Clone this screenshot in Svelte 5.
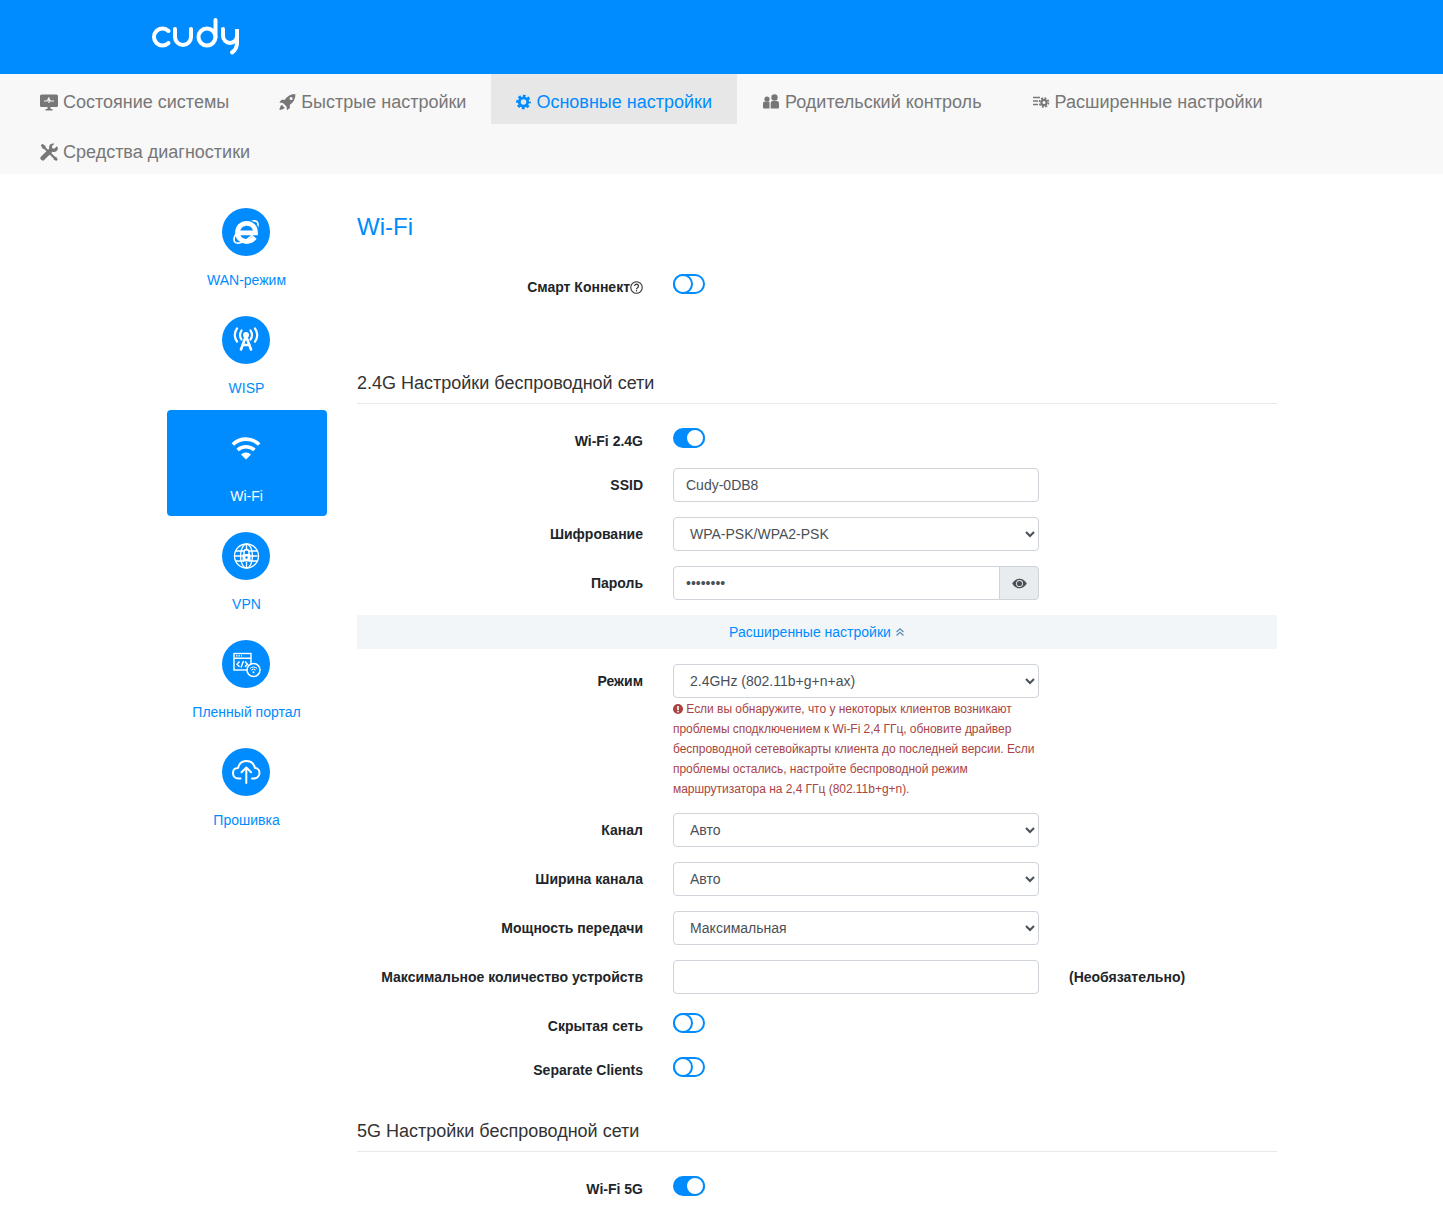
<script>
  const nav = [
    { id: 'monitor', label: 'Состояние системы', w: 18 },
    { id: 'rocket', label: 'Быстрые настройки', w: 17 },
    { id: 'gear', label: 'Основные настройки', w: 15, active: true },
    { id: 'users', label: 'Родительский контроль', w: 18 },
    { id: 'sliders', label: 'Расширенные настройки', w: 18 },
    { id: 'tools', label: 'Средства диагностики', w: 18 }
  ];
  const side = [
    { id: 'ie', label: 'WAN-режим' },
    { id: 'tower', label: 'WISP' },
    { id: 'wifi', label: 'Wi-Fi', active: true },
    { id: 'globe', label: 'VPN' },
    { id: 'portal', label: 'Пленный портал' },
    { id: 'cloud', label: 'Прошивка' }
  ];
</script>

{#snippet navIcon(id, w)}
  <svg class="nav-icon" width={w} height="18" viewBox="0 0 18 18" aria-hidden="true">
    {#if id === 'monitor'}
      <path fill="currentColor" d="M1.500 1.500h15A1.500 1.500 0 0 1 18 3v9.500a1.500 1.500 0 0 1-1.500 1.500h-15A1.500 1.500 0 0 1 0 12.500V3a1.500 1.500 0 0 1 1.500-1.500zM7.500 14h3v2h2v1.500h-7V16h2z"/>
      <path fill="none" stroke="#f8f8f8" stroke-width="1.200" d="M4 8h3l1-1.500L9 4.500v5.500M9 6.500l1.500 1.500H14"/>
    {:else if id === 'rocket'}
      <path fill="currentColor" fill-rule="evenodd" d="M17.500.5C12.500.5 8.700 2.500 6.200 6.500H2.700L.3 9.500l3.900.6 3.700 3.700.6 3.900 3-2.400v-3.500c4-2.500 6-6.300 6-11.800zM12.800 3.600a1.700 1.700 0 1 1 0 3.400 1.700 1.700 0 0 1 0-3.400z"/>
      <path fill="currentColor" d="M3 12c-1.500 1-2.200 3-2.500 5.500C3 17.200 5 16.500 6 15z"/>
    {:else if id === 'gear'}
      <g fill="none" stroke="currentColor">
        <circle cx="9" cy="9" r="5" stroke-width="3.400"/>
        <circle cx="9" cy="9" r="7.400" stroke-width="2.800" stroke-dasharray="3.300 2.500" stroke-dashoffset="1.600"/>
      </g>
    {:else if id === 'users'}
      <g fill="currentColor">
        <circle cx="5" cy="6" r="2.600"/>
        <circle cx="12.500" cy="4.500" r="3.200"/>
        <path d="M1 10.500a2 2 0 0 1 2-2h3.500a2 2 0 0 1 1 .4V15.500H2a1 1 0 0 1-1-1z"/>
        <path d="M8.700 10a2 2 0 0 1 2-2h3.800a2.500 2.500 0 0 1 2.500 2.500v4a1 1 0 0 1-1 1H8.700z"/>
      </g>
    {:else if id === 'sliders'}
      <g fill="none" stroke="currentColor">
        <path stroke-width="1.400" d="M1 4.500h7M1 8h5M1 11.500h5"/>
        <circle cx="12" cy="9.500" r="2.600" stroke-width="2.200"/>
        <circle cx="12" cy="9.500" r="4.500" stroke-width="1.600" stroke-dasharray="2 1.530"/>
      </g>
    {:else if id === 'tools'}
      <g fill="currentColor">
        <path d="M0.800 2.300 2.300.8l3.200 2.200.2 1.500 9.500 9.500.9-.2 1.600 2.700-1.500 1.500-2.700-1.700.1-.9-9.500-9.500-1.400-.2z"/>
        <path d="M16.900 3.200l-2.600 2.600-2-.5-.5-2L14.400.7c-2-.8-4.200.1-5 2-.4 1-.4 1.900-.1 2.800L.9 13.800a1.800 1.800 0 0 0 0 2.600l.7.700a1.800 1.800 0 0 0 2.600 0l8.300-8.400c2.400.8 4.800-.3 5.300-3 .1-.9 0-1.800-.9-2.500z"/>
      </g>
    {/if}
  </svg>
{/snippet}

{#snippet sideIcon(id)}
  <svg class="side-icon" width="48" height="48" viewBox="0 0 48 48" aria-hidden="true">
    <circle cx="24" cy="24" r="24" fill="#008cff"/>
    {#if id === 'ie'}
      <ellipse cx="24" cy="24" rx="15" ry="6.500" fill="none" stroke="#fff" stroke-width="1.700" transform="rotate(-42 24 24)"/>
      <path fill="none" stroke="#008cff" stroke-width="8" d="M15.500 24.500a9 9 0 1 1 18 0"/>
      <path fill="none" stroke="#fff" stroke-width="4.800" stroke-linecap="butt" d="M15.500 24.800H33.500C33.500 19.100 29.800 15.300 24.700 15.300C19.400 15.300 15.500 19.400 15.500 24.800C15.500 30 19.500 33.500 24.500 33.500C27.900 33.500 30.500 32.200 32.800 29.200"/>
    {:else if id === 'tower'}
      <g fill="none" stroke="#fff" stroke-linecap="round">
        <path stroke-width="2.600" d="M24 20 19 33.500M24 20 29 33.500M20.500 29H27.500"/>
        <path stroke-width="2.200" d="M19.500 14.500Q16.500 19 19.500 23.500M28.500 14.500Q31.500 19 28.500 23.500M15 12.500Q10.500 19 15 25.500M33 12.500Q37.500 19 33 25.500"/>
      </g>
      <circle cx="24" cy="19" r="3" fill="#fff"/>
    {:else if id === 'wifi'}
      <g fill="none" stroke="#fff" stroke-width="3.600">
        <path d="M10.800 20.500A19 19 0 0 1 37.200 20.500"/>
        <path d="M15.600 26A12.500 12.500 0 0 1 32.400 26"/>
      </g>
      <path fill="#fff" d="M24 35.500 19 30.500A7 7 0 0 1 29 30.500z"/>
    {:else if id === 'globe'}
      <g fill="none" stroke="#fff" stroke-width="1.300">
        <circle cx="24.500" cy="24" r="12"/>
        <ellipse cx="24.500" cy="24" rx="6" ry="12"/>
        <path d="M24.500 12V36M13.500 19H35.500M13.500 29H35.500M12.500 24H35.500"/>
        <path stroke="#008cff" stroke-width="5" d="M24.500 18.500V30"/>
        <path stroke-width="1.500" d="M22 22.500V20a2.500 2.500 0 0 1 5 0V22.500"/>
      </g>
      <rect x="20.500" y="22" width="8" height="7.500" rx="1" fill="#fff"/>
      <circle cx="24.500" cy="25.500" r="1.200" fill="#008cff"/>
    {:else if id === 'portal'}
      <g fill="none" stroke="#fff" stroke-width="1.400">
        <rect x="12" y="13.500" width="17" height="16.500"/>
        <path d="M12 18.300H29M21.500 21 19 27.500M17.500 21.500 15 24.200 17.500 26.800M23 21.500 25.500 24.200 23 26.800"/>
        <path stroke-dasharray="1.500 1" d="M14 15.900H20"/>
      </g>
      <circle cx="31.500" cy="30" r="6.500" fill="#008cff" stroke="#fff" stroke-width="1.500"/>
      <g fill="none" stroke="#fff" stroke-width="1">
        <path d="M28 28.500A5 5 0 0 1 35 28.500M29.300 30.200A3 3 0 0 1 33.700 30.200"/>
      </g>
      <circle cx="31.500" cy="32.300" r="1" fill="#fff"/>
    {:else if id === 'cloud'}
      <g fill="none" stroke="#fff" stroke-width="2" stroke-linecap="round" stroke-linejoin="round">
        <path d="M18.500 30.500H16.500C13 30.500 11 28 11 25C11 22 13 20 16 20C17 15.500 20.500 13 24.500 13C29 13 32 16 33 20C36 20 37.500 22.500 37.500 25C37.500 28 35 30.500 32 30.500H30"/>
        <path d="M24.300 35V19.500M19.500 24.300 24.300 19.500 29.100 24.300"/>
      </g>
    {/if}
  </svg>
{/snippet}

{#snippet toggle(on)}
  <span class="toggle" class:on><span class="knob"></span></span>
{/snippet}

<header class="top">
  <div class="brand">
    <svg width="92" height="42" viewBox="150 15 92 42" role="img" aria-label="cudy">
      <g fill="none" stroke="#fff" stroke-width="4" stroke-linecap="round">
        <path d="M168.500 31A8.500 8.500 0 1 0 168.500 43"/>
        <path d="M175 29V37A8 8 0 0 0 191 37V29"/>
        <circle cx="207" cy="37" r="8.500"/>
        <path d="M215.500 20V37"/>
        <path d="M223 29V36A7 7 0 0 0 237 36V29V43C237 48 235 50.500 232 52.500"/>
      </g>
    </svg>
  </div>
</header>

<nav class="menu">
  {#each nav as n}
    <a class="menu-item" class:active={n.active} href="#top">
      {@render navIcon(n.id, n.w)}
      <span>{n.label}</span>
    </a>
  {/each}
</nav>

<div class="wrap">
  <aside class="side">
    {#each side as s}
      <a class="side-item" class:active={s.active} href="#top">
        {@render sideIcon(s.id)}
        <span>{s.label}</span>
      </a>
    {/each}
  </aside>

  <main class="main">
    <h1>Wi-Fi</h1>

    <div class="row toggle-row smart">
      <span class="lab">Смарт Коннект<svg class="help" width="13" height="13" viewBox="0 0 12 12" aria-hidden="true"><circle cx="6" cy="6" r="5.300" fill="none" stroke="#333" stroke-width="1"/><path fill="none" stroke="#333" stroke-width="1.100" d="M4.200 4.700a1.800 1.800 0 1 1 2.800 1.500c-.7.500-1 .8-1 1.500"/><circle cx="6" cy="9.100" r=".7" fill="#333"/></svg></span>
      {@render toggle(false)}
    </div>

    <h2>2.4G Настройки беспроводной сети</h2>

    <div class="row toggle-row">
      <span class="lab">Wi-Fi 2.4G</span>
      {@render toggle(true)}
    </div>

    <div class="row">
      <span class="lab">SSID</span>
      <input class="ctl" type="text" value="Cudy-0DB8" />
    </div>

    <div class="row">
      <span class="lab">Шифрование</span>
      <select class="ctl"><option>WPA-PSK/WPA2-PSK</option></select>
    </div>

    <div class="row">
      <span class="lab">Пароль</span>
      <div class="group">
        <input class="ctl pass" type="password" value="12345678" />
        <span class="addon">
          <svg width="15" height="11" viewBox="0 0 16 12" aria-hidden="true">
            <path fill="#495057" fill-rule="evenodd" d="M0 6C2 2.500 4.800.8 8 .8S14 2.500 16 6C14 9.500 11.200 11.200 8 11.200S2 9.500 0 6zM8 2.200a3.800 3.800 0 1 0 0 7.600 3.800 3.800 0 0 0 0-7.600z"/>
            <circle cx="8" cy="6" r="2.800" fill="#495057"/>
          </svg>
        </span>
      </div>
    </div>

    <div class="adv">
      Расширенные настройки
      <svg width="10" height="10" viewBox="0 0 10 10" aria-hidden="true"><path fill="none" stroke="#5a8fb5" stroke-width="1.300" d="M1.500 5 5 1.800 8.500 5M1.500 8.500 5 5.300 8.500 8.500"/></svg>
    </div>

    <div class="row tight">
      <span class="lab">Режим</span>
      <div class="stack">
        <select class="ctl"><option>2.4GHz (802.11b+g+n+ax)</option></select>
        <p class="note"><svg width="10" height="10" viewBox="0 0 10 10" aria-hidden="true"><circle cx="5" cy="5" r="5" fill="#a94442"/><rect x="4.200" y="2" width="1.600" height="4" fill="#fff"/><rect x="4.200" y="6.800" width="1.600" height="1.500" fill="#fff"/></svg> Если вы обнаружите, что у некоторых клиентов возникают проблемы сподключением к Wi-Fi 2,4 ГГц, обновите драйвер беспроводной сетевойкарты клиента до последней версии. Если проблемы остались, настройте беспроводной режим маршрутизатора на 2,4 ГГц (802.11b+g+n).</p>
      </div>
    </div>

    <div class="row">
      <span class="lab">Канал</span>
      <select class="ctl"><option>Авто</option></select>
    </div>

    <div class="row">
      <span class="lab">Ширина канала</span>
      <select class="ctl"><option>Авто</option></select>
    </div>

    <div class="row">
      <span class="lab">Мощность передачи</span>
      <select class="ctl"><option>Максимальная</option></select>
    </div>

    <div class="row">
      <span class="lab">Максимальное количество устройств</span>
      <input class="ctl" type="text" />
      <span class="opt">(Необязательно)</span>
    </div>

    <div class="row toggle-row">
      <span class="lab">Скрытая сеть</span>
      {@render toggle(false)}
    </div>

    <div class="row toggle-row last">
      <span class="lab">Separate Clients</span>
      {@render toggle(false)}
    </div>

    <h2>5G Настройки беспроводной сети</h2>

    <div class="row toggle-row">
      <span class="lab">Wi-Fi 5G</span>
      {@render toggle(true)}
    </div>
  </main>
</div>

<style>
  :global(body) {
    margin: 0;
    height: 1208px;
    overflow: hidden;
    background: #fff;
    font-family: "Liberation Sans", Arial, sans-serif;
    font-size: 14px;
    line-height: 1.5;
    color: #212529;
  }
  .top {
    height: 74px;
    background: #008cff;
  }
  .brand {
    width: 1110px;
    margin: 0 auto;
    padding-top: 15px;
    height: 42px;
  }
  .brand svg { display: block; margin-left: -16.500px; }
  .menu {
    display: flex;
    flex-wrap: wrap;
    padding-left: 15px;
    background: #f8f8f8;
  }
  .menu-item {
    display: flex;
    align-items: center;
    gap: 5px;
    height: 50px;
    padding: 7px 25px 0;
    font-size: 18px;
    color: #777;
    text-decoration: none;
    box-sizing: border-box;
  }
  .menu-item.active {
    background: #e7e7e7;
    color: #008cff;
  }
  .nav-icon { flex: none; margin-top: -2px; }
  .wrap {
    display: flex;
    gap: 30.500px;
    width: 1110px;
    margin: 0 auto;
    padding-top: 20px;
  }
  .side {
    flex: none;
    width: 160px;
    display: flex;
    flex-direction: column;
    gap: 2px;
  }
  .side-item {
    display: flex;
    flex-direction: column;
    align-items: center;
    height: 106px;
    padding-top: 14px;
    box-sizing: border-box;
    border-radius: 4px;
    color: #008cff;
    text-decoration: none;
    font-size: 14px;
    gap: 14px;
    line-height: 21px;
  }
  .side-item.active {
    background: #008cff;
    color: #fff;
  }
  .side-icon { display: block; flex: none; margin-left: -1px; }
  .main {
    flex: none;
    width: 920px;
    padding-top: 15px;
  }
  h1 {
    margin: 0 0 25px;
    font-size: 24px;
    font-weight: 400;
    line-height: 36px;
    color: #008cff;
  }
  h2 {
    margin: 0 0 20px;
    padding-bottom: 6px;
    border-bottom: 1px solid #e9e9e9;
    font-size: 18px;
    font-weight: 400;
    line-height: 27px;
    color: #333;
  }
  .row {
    display: grid;
    grid-template-columns: 286px 366px auto;
    column-gap: 30px;
    align-items: start;
    margin-bottom: 15px;
  }
  .row.tight { margin-bottom: 14px; }
  .row.smart { margin-bottom: 71px; }
  .row.last { margin-bottom: 36px; }
  .toggle-row { height: 29px; }
  .lab {
    padding-top: 7px;
    text-align: right;
    font-weight: 700;
    line-height: 21px;
    color: #212529;
  }
  .help { vertical-align: -2px; }
  .toggle {
    display: block;
    position: relative;
    width: 32px;
    height: 20px;
    margin-top: 4px;
    box-sizing: border-box;
    border: 2px solid #008cff;
    border-radius: 10px;
    background: #fff;
  }
  .knob {
    position: absolute;
    left: -2px;
    top: -2px;
    width: 20px;
    height: 20px;
    box-sizing: border-box;
    border: 2px solid #008cff;
    border-radius: 50%;
    background: #fff;
  }
  .toggle.on { background: #008cff; }
  .toggle.on .knob {
    left: auto;
    right: -2px;
    border-color: #008cff;
  }
  .ctl {
    display: block;
    width: 100%;
    height: 34px;
    margin: 0;
    box-sizing: border-box;
    padding: 0 12px;
    border: 1px solid #ced4da;
    border-radius: 4px;
    background: #fff;
    color: #495057;
    font: 14px "Liberation Sans", Arial, sans-serif;
    outline: none;
  }
  .group { display: flex; }
  .pass {
    flex: 1;
    width: auto;
    min-width: 0;
    border-radius: 4px 0 0 4px;
  }
  .addon {
    flex: none;
    width: 40px;
    height: 34px;
    margin-left: -1px;
    box-sizing: border-box;
    display: flex;
    align-items: center;
    justify-content: center;
    border: 1px solid #ced4da;
    border-radius: 0 4px 4px 0;
    background: #e9ecef;
  }
  .adv {
    height: 34px;
    margin-bottom: 15px;
    display: flex;
    align-items: center;
    justify-content: center;
    gap: 4px;
    background: #f2f6f9;
    color: #008cff;
  }
  .stack { min-width: 0; }
  .note {
    margin: 1px 0 0;
    font-size: 12px;
    line-height: 20px;
    letter-spacing: -0.03px;
    color: #a94442;
  }
  .note svg { vertical-align: -1px; }
  .opt {
    padding-top: 7px;
    font-weight: 700;
    line-height: 21px;
  }
</style>
